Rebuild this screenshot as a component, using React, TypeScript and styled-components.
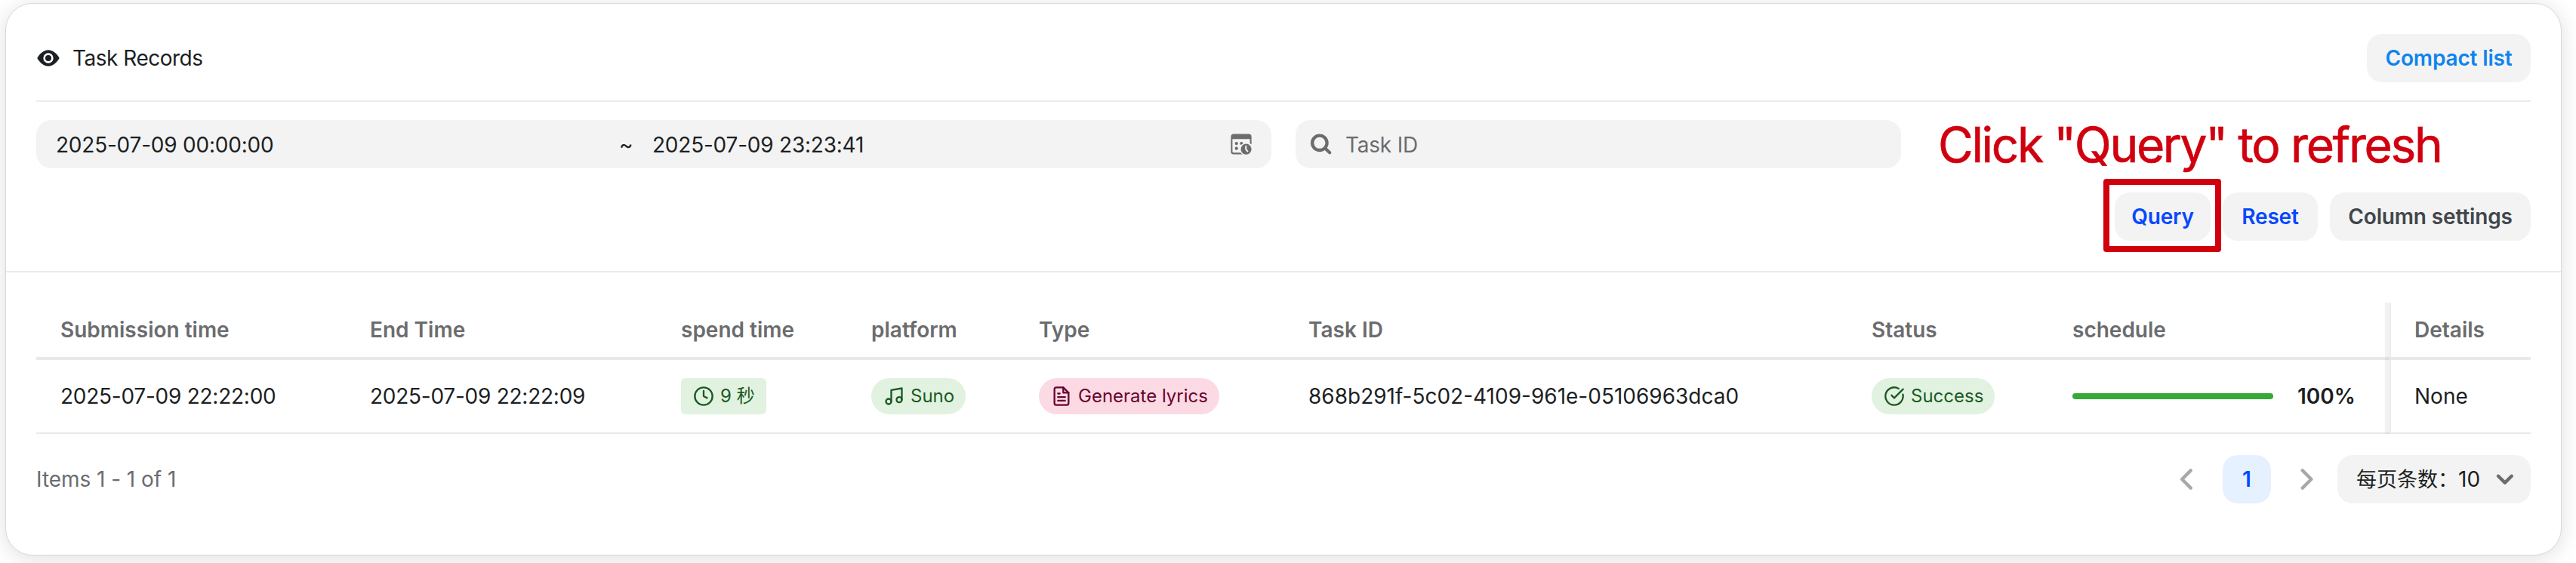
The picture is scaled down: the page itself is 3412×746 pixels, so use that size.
import React from 'react';
import styled, { createGlobalStyle } from 'styled-components';
import { Clock, Music, CircleCheckBig } from 'lucide-react';

const Global = createGlobalStyle`
  * { box-sizing: border-box; }
  body {
    margin: 0;
    height: 746px;
    overflow: hidden;
    background: #fff;
    color: #1c1f23;
    font-family: Inter, "Noto Sans CJK SC", sans-serif;
    font-size: 28px;
    line-height: 40px;
  }
  svg { display: block; flex: none; }
`;

const Card = styled.main`
  margin: 4px 19px 0 7px;
  height: 732px;
  border: 1px solid #d9d9d9;
  border-radius: 36px;
  background: #fff;
  box-shadow: 0 4px 28px rgba(0, 0, 0, 0.13);
`;

const Head = styled.header`
  height: 356px;
  padding: 0 40px;
  border-bottom: 2px solid #ebebeb;
`;

const TitleBar = styled.div`
  display: flex;
  align-items: center;
  justify-content: space-between;
  height: 130px;
  padding-top: 16px;
  border-bottom: 2px solid #ebebeb;
`;

const Title = styled.div`
  display: flex;
  align-items: center;
  gap: 16px;
  letter-spacing: -0.5px;
`;

const Button = styled.button<{ $color: string; $width: number }>`
  width: ${p => p.$width}px;
  height: 64px;
  padding: 0;
  border: 0;
  border-radius: 20px;
  background: #f3f3f3;
  color: ${p => p.$color};
  font: 600 28px/40px Inter, sans-serif;
  letter-spacing: -0.15px;
  white-space: nowrap;
`;

const Filters = styled.div`
  display: flex;
  align-items: center;
  gap: 32px;
  margin-top: 24px;
`;

const Field = styled.div<{ $width: number; $left: number }>`
  display: flex;
  align-items: center;
  width: ${p => p.$width}px;
  height: 64px;
  padding: 0 24px 0 ${p => p.$left}px;
  border-radius: 20px;
  background: #f3f3f3;
`;

const FieldText = styled.span`
  padding-top: 2px;
  letter-spacing: -0.22px;
`;

const DateStart = styled(FieldText)`
  width: 746px;
`;

const Tilde = styled(FieldText)`
  width: 44px;
`;

const DateEnd = styled(FieldText)`
  flex: 1;
`;

const Placeholder = styled(FieldText)`
  margin-left: 16px;
  color: #6b6c6e;
`;

const Hint = styled.div`
  height: 64px;
  margin-left: 17px;
  padding-top: 1px;
  color: #d0000f;
  font-size: 64px;
  line-height: 64px;
  letter-spacing: -2.35px;
  white-space: nowrap;
  -webkit-text-stroke: 0.6px #d0000f;
`;

const Actions = styled.div`
  display: flex;
  justify-content: flex-end;
  gap: 16px;
  margin-top: 32px;
`;

const Marked = styled.div`
  position: relative;
  &::after {
    content: '';
    position: absolute;
    inset: -18px -14px -15px -15px;
    border: 8px solid #d0000f;
    border-radius: 4px;
  }
`;

const Table = styled.section`
  display: grid;
  grid-template-columns: 410px 412px 252px 222px 357px 746px 266px 452px 187px;
  margin: 40px 40px 0;
`;

const HeadCell = styled.div`
  height: 76px;
  padding: 16px 0 0 32px;
  border-bottom: 4px solid #e9e9e9;
  color: #6b6c6e;
  font-weight: 600;
  white-space: nowrap;
`;

const Cell = styled.div`
  display: flex;
  align-items: center;
  height: 98px;
  padding-left: 32px;
  border-bottom: 2px solid #e9e9e9;
  white-space: nowrap;
`;

const TimeCell = styled(Cell)`
  letter-spacing: -0.25px;
`;

const FixedHead = styled(HeadCell)`
  padding-left: 33px;
  box-shadow: -6px 0 0 rgba(0, 0, 0, 0.05), inset 2px 0 0 #ebebeb;
`;

const FixedCell = styled(Cell)`
  padding-left: 33px;
  box-shadow: -6px 0 0 rgba(0, 0, 0, 0.05), inset 2px 0 0 #ebebeb;
`;

const Tag = styled.span<{ $tone: 'green' | 'pink'; $round?: boolean; $width: number }>`
  display: inline-flex;
  align-items: center;
  gap: 8px;
  width: ${p => p.$width}px;
  height: 48px;
  padding-left: 16px;
  border-radius: ${p => (p.$round ? 24 : 6)}px;
  background: ${p => (p.$tone === 'green' ? '#e1f2e0' : '#fcdae3')};
  color: ${p => (p.$tone === 'green' ? '#1b5924' : '#6a0131')};
  font-size: 24px;
  line-height: 32px;
`;

const Track = styled.div`
  width: 266px;
  height: 8px;
  margin-right: 32px;
  border-radius: 4px;
  background: #36a936;
`;

const Percent = styled.span`
  font-weight: 600;
`;

const Footer = styled.footer`
  display: flex;
  align-items: center;
  justify-content: space-between;
  margin: 28px 40px 0;
  color: #6b6c6e;
`;

const Total = styled.span`
  letter-spacing: -0.05px;
`;

const Pager = styled.nav`
  display: flex;
  align-items: center;
`;

const Page = styled.span`
  width: 64px;
  height: 64px;
  margin: 0 32px;
  border-radius: 20px;
  background: #e5f1ff;
  color: #0548ff;
  font-weight: 600;
  line-height: 64px;
  text-align: center;
`;

const PageSize = styled.div`
  display: flex;
  align-items: center;
  justify-content: space-between;
  width: 256px;
  height: 64px;
  margin-left: 24px;
  padding: 0 18px 0 25px;
  border-radius: 20px;
  background: #f3f3f3;
  color: #1c1f23;
  font-size: 27px;
`;

const SizeNumber = styled.span`
  font-size: 28px;
`;

const Eye = () => (
  <svg width="32" height="32" viewBox="0 0 24 24" fill="#1c1f23">
    <path fillRule="evenodd" d="M1 12s4-8 11-8 11 8 11 8-4 8-11 8S1 12 1 12Zm16 0a5 5 0 1 1-10 0 5 5 0 0 1 10 0Zm-5 3a3 3 0 1 0 0-6 3 3 0 0 0 0 6Z" />
  </svg>
);

const CalendarClock = () => (
  <svg width="32" height="32" viewBox="0 0 24 24" fill="#6b6c6e">
    <path fillRule="evenodd" d="M4.500 1.800A2.700 2.700 0 0 0 1.800 4.500v15A2.700 2.700 0 0 0 4.500 22.200h15a2.700 2.700 0 0 0 2.700-2.700v-15a2.700 2.700 0 0 0-2.700-2.700h-15ZM3.300 7h17.400v12.200c0 .8-.4 1.300-1.200 1.300h-15c-.8 0-1.200-.5-1.200-1.300V7Z" />
    <circle cx="7.300" cy="11.300" r="1.600" />
    <circle cx="12.300" cy="11.300" r="1.600" />
    <circle cx="7.300" cy="16.300" r="1.600" />
    <path d="M16.900 10.500a6.500 6.500 0 0 0 0 13h6v-11a9 9 0 0 0-6-2Z" fill="#f3f3f3" />
    <circle cx="16.900" cy="17" r="5.300" />
    <path d="M16.700 14v3.200l1.700 2" fill="none" stroke="#f3f3f3" strokeWidth="1.500" strokeLinecap="round" />
  </svg>
);

const Magnifier = () => (
  <svg width="32" height="32" viewBox="0 0 24 24" fill="none" stroke="#6b6c6e" strokeWidth="3.200" strokeLinecap="round">
    <circle cx="10.400" cy="10.700" r="7.300" />
    <path d="m15.700 16 4.700 4.500" />
  </svg>
);

const Document = () => (
  <svg width="28" height="28" viewBox="0 0 24 24" fill="none" stroke="currentColor" strokeWidth="2" strokeLinecap="round" strokeLinejoin="round">
    <path d="M14 2H6a2 2 0 0 0-2 2v16a2 2 0 0 0 2 2h12a2 2 0 0 0 2-2V8l-6-6Z" />
    <path d="M14 2v6h6M16 13H8M16 17H8M10 9H8" />
  </svg>
);

const Chevron = ({ d, color }: { d: string; color: string }) => (
  <svg width="32" height="32" viewBox="0 0 24 24" fill="none" stroke={color} strokeWidth="3.300" strokeLinecap="round" strokeLinejoin="round">
    <path d={d} />
  </svg>
);

const columns = ['Submission time', 'End Time', 'spend time', 'platform', 'Type', 'Task ID', 'Status', 'schedule'];

export default function App() {
  return (
    <>
      <Global />
      <Card>
        <Head>
          <TitleBar>
            <Title><Eye />Task Records</Title>
            <Button $color="#0e84ee" $width={217}>Compact list</Button>
          </TitleBar>
          <Filters>
            <Field $width={1636} $left={26}>
              <DateStart>2025-07-09 00:00:00</DateStart>
              <Tilde>~</Tilde>
              <DateEnd>2025-07-09 23:23:41</DateEnd>
              <CalendarClock />
            </Field>
            <Field $width={802} $left={18}>
              <Magnifier />
              <Placeholder>Task ID</Placeholder>
            </Field>
            <Hint>Click "Query" to refresh</Hint>
          </Filters>
          <Actions>
            <Marked><Button $color="#0548ff" $width={127}>Query</Button></Marked>
            <Button $color="#0548ff" $width={126}>Reset</Button>
            <Button $color="#41464c" $width={266}>Column settings</Button>
          </Actions>
        </Head>
        <Table>
          {columns.map(name => <HeadCell key={name}>{name}</HeadCell>)}
          <FixedHead>Details</FixedHead>
          <TimeCell>2025-07-09 22:22:00</TimeCell>
          <TimeCell>2025-07-09 22:22:09</TimeCell>
          <Cell><Tag $tone="green" $width={113}><Clock size={28} />9 秒</Tag></Cell>
          <Cell><Tag $tone="green" $width={125} $round><Music size={28} />Suno</Tag></Cell>
          <Cell><Tag $tone="pink" $width={239} $round><Document />Generate lyrics</Tag></Cell>
          <Cell>868b291f-5c02-4109-961e-05106963dca0</Cell>
          <Cell><Tag $tone="green" $width={163} $round><CircleCheckBig size={28} />Success</Tag></Cell>
          <Cell><Track /><Percent>100%</Percent></Cell>
          <FixedCell>None</FixedCell>
        </Table>
        <Footer>
          <Total>Items 1 - 1 of 1</Total>
          <Pager>
            <Chevron color="#a7a8aa" d="m16.300 3.300-8.700 8.700 8.700 8.700" />
            <Page>1</Page>
            <Chevron color="#a7a8aa" d="m7.300 3.300 8.700 8.700-8.700 8.700" />
            <PageSize>
              <span>每页条数：<SizeNumber>10</SizeNumber></span>
              <Chevron color="#6b6c6e" d="m5.200 8.800 6.700 6.700 6.700-6.700" />
            </PageSize>
          </Pager>
        </Footer>
      </Card>
    </>
  );
}
